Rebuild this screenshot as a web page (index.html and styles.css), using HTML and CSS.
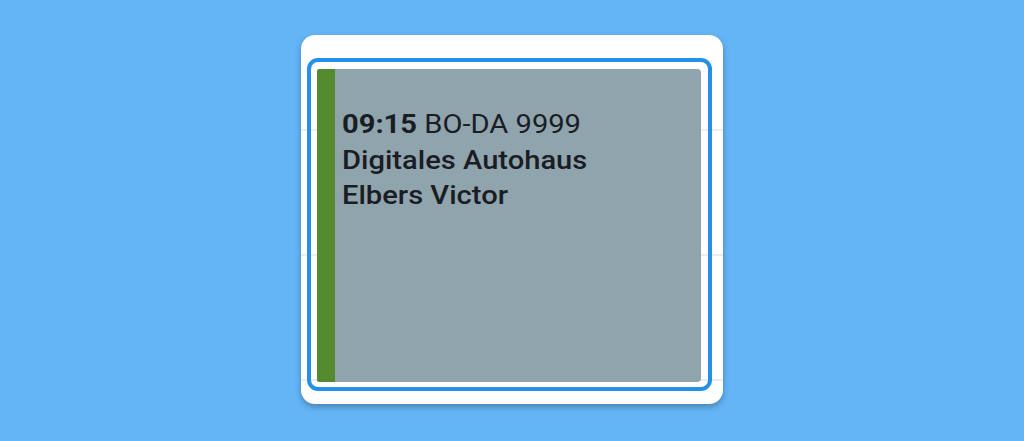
FILE: index.html
```html
<!DOCTYPE html>
<html lang="de">
<head>
<meta charset="utf-8">
<title>Termin</title>
<link rel="stylesheet" href="styles.css">
</head>
<body>
<div class="stage">
  <div class="cell">
    <div class="ring">
      <div class="event">
        <div class="event-text">
          <div class="line"><span class="time">09:15</span> <span class="plate">BO-DA 9999</span></div>
          <div class="line strong">Digitales Autohaus</div>
          <div class="line strong">Elbers Victor</div>
        </div>
      </div>
    </div>
  </div>
</div>
</body>
</html>
```

FILE: styles.css
```css
html, body {
  margin: 0;
  padding: 0;
}
body {
  background: #64b5f6;
  width: 1024px;
  height: 441px;
  overflow: hidden;
  font-family: Roboto, "Liberation Sans", sans-serif;
}
.stage {
  display: flex;
  justify-content: center;
  padding-top: 35px;
}
.cell {
  width: 422px;
  height: 369px;
  box-sizing: border-box;
  padding: 23px 11px 13px 6px;
  border-radius: 14px;
  background-color: #ffffff;
  background-image: repeating-linear-gradient(to bottom, transparent 0, transparent 94px, #ececec 94px, #ececec 96px, transparent 96px, transparent 125px);
  box-shadow: 0 3px 6px rgba(0, 0, 0, 0.28);
  margin-left: -1px;
}
.ring {
  height: 100%;
  box-sizing: border-box;
  border: 4px solid #2490e8;
  border-radius: 11px;
  padding: 7px 7px 5px 6px;
}
.event {
  height: 100%;
  box-sizing: border-box;
  background: #90a4ae;
  border-left: 18px solid #558b2f;
  border-radius: 2px 4px 4px 2px;
  padding: 38px 0 0 7px;
  color: #1a1d24;
  overflow: hidden;
}
.event-text {
  transform: scaleX(1.12);
  transform-origin: left top;
}
.line {
  font-size: 26px;
  line-height: 35.5px;
  white-space: nowrap;
}
.time {
  font-weight: 700;
}
.plate {
  font-weight: 400;
}
.strong {
  font-weight: 500;
}
```
